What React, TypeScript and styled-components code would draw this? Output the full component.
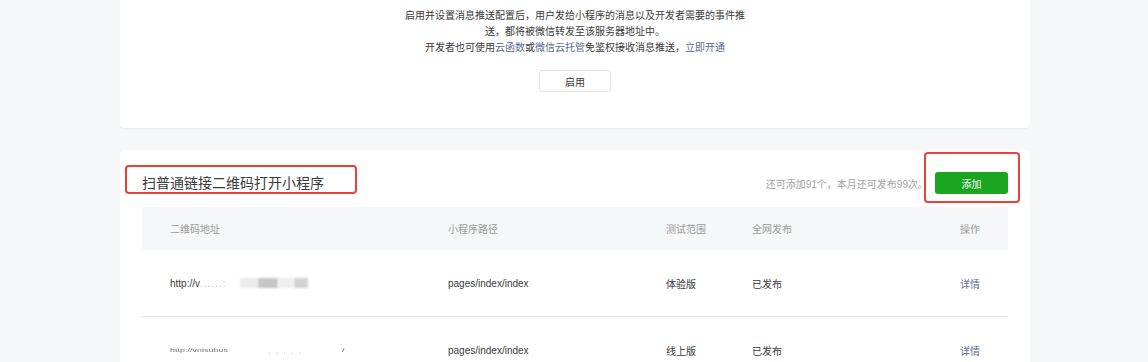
import React from 'react';
import styled, { createGlobalStyle } from 'styled-components';

const GlobalStyle = createGlobalStyle`
    html, body {
        margin: 0;
        padding: 0;
        background: #f6f7f9;
    }
    body {
        font-family: "Liberation Sans", "Noto Sans CJK SC", sans-serif;
        color: #3a3a3a;
        -webkit-font-smoothing: antialiased;
    }
`;

const Page = styled.div`
    display: flex;
    flex-direction: column;
    gap: 22px;
    width: 910px;
    margin-left: 120px;
    height: 362px;
    overflow: hidden;
`;

const Card = styled.div`
    background: #fff;
    border-radius: 4px;
    box-shadow: 0 1px 2px rgba(0, 0, 0, 0.05);
`;

const NoticeCard = styled(Card)`
    display: flex;
    flex-direction: column;
    align-items: center;
    padding: 8px 0 36px;
    border-top-left-radius: 0;
    border-top-right-radius: 0;
`;

const Notice = styled.p`
    margin: 0;
    width: 345px;
    font-size: 10px;
    line-height: 16px;
    text-align: center;
    color: #3a3a3a;
`;

const Link = styled.a`
    color: #576b95;
    text-decoration: none;
`;

const PlainButton = styled.button`
    margin-top: 14px;
    width: 72px;
    height: 22px;
    padding: 0;
    border: 1px solid #e4e4e4;
    border-radius: 3px;
    background: #fff;
    font-family: inherit;
    font-size: 10px;
    color: #3a3a3a;
`;

const ListCard = styled(Card)`
    flex: 1;
    padding: 22px 22px 0;
`;

const Header = styled.div`
    display: flex;
    align-items: center;
    height: 22px;
    margin-bottom: 13px;
`;

const Title = styled.h2`
    position: relative;
    margin: 0;
    font-size: 14px;
    font-weight: normal;
    line-height: 22px;
    color: #3a3a3a;

    &::after {
        content: '';
        position: absolute;
        inset: -7px -33px 0 -17px;
        border: 2px solid #e8413a;
        border-radius: 4px;
    }
`;

const Hint = styled.span`
    margin-left: auto;
    margin-right: 7px;
    font-size: 10px;
    color: #a3a3a3;
`;

const Highlight = styled.div`
    position: relative;

    &::after {
        content: '';
        position: absolute;
        inset: -20px -12px -9px -11px;
        border: 2px solid #e8413a;
        border-radius: 4px;
        pointer-events: none;
    }
`;

const PrimaryButton = styled.button`
    display: block;
    width: 73px;
    height: 22px;
    padding: 0;
    border: none;
    border-radius: 3px;
    background: #1aa51f;
    color: #fff;
    font-family: inherit;
    font-size: 10px;
`;

const Row = styled.div<{ head?: boolean }>`
    display: grid;
    grid-template-columns: 278px 218px 86px 1fr auto;
    align-items: center;
    padding: 0 28px;
    height: ${(p) => (p.head ? '43px' : '66px')};
    background: ${(p) => (p.head ? '#f6f7f9' : '#fff')};
    color: ${(p) => (p.head ? '#9a9a9a' : '#3a3a3a')};
    font-size: 10px;
    border-bottom: ${(p) => (p.head ? 'none' : '1px solid #e7e7e7')};
`;

const Cell = styled.div<{ right?: boolean }>`
    text-align: ${(p) => (p.right ? 'right' : 'left')};
    white-space: nowrap;
`;

const Url = styled.div`
    display: flex;
    align-items: center;
    height: 12px;
`;

const Smudge = styled.span<{ w: number; shade: string; gap?: number }>`
    display: inline-block;
    width: ${(p) => p.w}px;
    height: 10px;
    margin-left: ${(p) => p.gap ?? 0}px;
    background: ${(p) => p.shade};
    filter: blur(1px);
`;

const Dots = styled.span`
    color: #c4c4c4;
    letter-spacing: 1px;
    filter: blur(0.5px);
`;

const Squashed = styled.span`
    display: inline-block;
    color: #777;
    font-size: 9px;
    transform: scaleY(0.55);
    filter: blur(0.3px);
`;

const rows = [
    { path: 'pages/index/index', range: '体验版', status: '已发布', masked: 'a' },
    { path: 'pages/index/index', range: '线上版', status: '已发布', masked: 'b' },
];

const App: React.FC = () => (
    <>
        <GlobalStyle />
        <Page>
            <NoticeCard>
                <Notice>
                    启用并设置消息推送配置后，用户发给小程序的消息以及开发者需要的事件推送，都将被微信转发至该服务器地址中。
                </Notice>
                <Notice>
                    开发者也可使用<Link>云函数</Link>或<Link>微信云托管</Link>免鉴权接收消息推送，<Link>立即开通</Link>
                </Notice>
                <PlainButton>启用</PlainButton>
            </NoticeCard>
            <ListCard>
                <Header>
                    <Title>扫普通链接二维码打开小程序</Title>
                    <Hint>还可添加91个，本月还可发布99次。</Hint>
                    <Highlight>
                        <PrimaryButton>添加</PrimaryButton>
                    </Highlight>
                </Header>
                <Row head>
                    <Cell>二维码地址</Cell>
                    <Cell>小程序路径</Cell>
                    <Cell>测试范围</Cell>
                    <Cell>全网发布</Cell>
                    <Cell right>操作</Cell>
                </Row>
                {rows.map((r) => (
                    <Row key={r.masked}>
                        <Cell>
                            {r.masked === 'a' ? (
                                <Url>
                                    http://v<Dots>......:</Dots>
                                    <Smudge w={18} shade="#ececec" gap={14} />
                                    <Smudge w={20} shade="#c6c6c6" />
                                    <Smudge w={15} shade="#efefef" />
                                    <Smudge w={14} shade="#d2d2d2" gap={1} />
                                </Url>
                            ) : (
                                <Url>
                                    <Squashed>http://vnisubus</Squashed>
                                    <Dots style={{ marginLeft: 40 }}>. . . . .</Dots>
                                    <Squashed style={{ marginLeft: 40 }}>/</Squashed>
                                </Url>
                            )}
                        </Cell>
                        <Cell>{r.path}</Cell>
                        <Cell>{r.range}</Cell>
                        <Cell>{r.status}</Cell>
                        <Cell right>
                            <Link>详情</Link>
                        </Cell>
                    </Row>
                ))}
            </ListCard>
        </Page>
    </>
);

export default App;
